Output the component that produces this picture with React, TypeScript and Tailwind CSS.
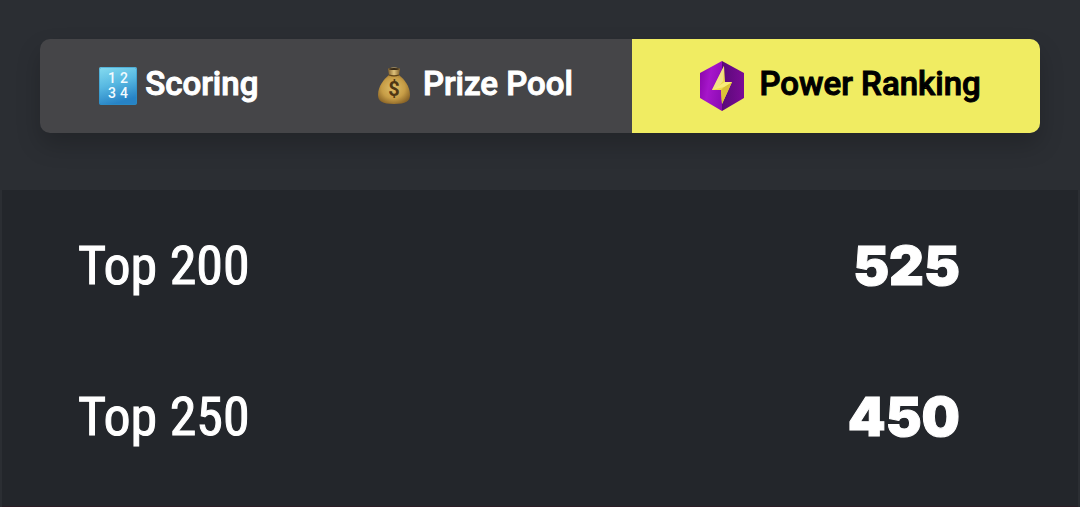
import { useState } from 'react';
import clsx from 'clsx';

const rankings = [
  { place: 'Top 200', points: 525 },
  { place: 'Top 250', points: 450 },
];

function NumbersIcon() {
  return (
    <svg viewBox="0 0 38 38" className="h-[38px] w-[38px] shrink-0" aria-hidden="true">
      <defs>
        <linearGradient id="numbers-bg" x1="0" y1="0" x2="0.3" y2="1">
          <stop offset="0" stopColor="#86dcf0" />
          <stop offset="0.5" stopColor="#58b9e2" />
          <stop offset="1" stopColor="#2783c6" />
        </linearGradient>
      </defs>
      <rect width="38" height="38" rx="2" fill="url(#numbers-bg)" />
      <rect x="0.5" y="0.5" width="37" height="37" rx="2" fill="none" stroke="#2c8fc4" strokeOpacity="0.5" />
      <g
        fill="#f2fbff"
        fontFamily="Roboto, sans-serif"
        fontWeight="500"
        fontSize="14"
        textAnchor="middle"
        className="[-webkit-text-stroke:0]"
      >
        <text x="13" y="16">1</text>
        <text x="25" y="16">2</text>
        <text x="13" y="31">3</text>
        <text x="25" y="31">4</text>
      </g>
    </svg>
  );
}

function MoneyBagIcon() {
  return (
    <svg viewBox="0 0 34 38" className="h-[38px] w-[34px] shrink-0" aria-hidden="true">
      <defs>
        <radialGradient id="bag-body" cx="0.48" cy="0.45" r="0.6">
          <stop offset="0" stopColor="#e0bf69" />
          <stop offset="0.6" stopColor="#c79d46" />
          <stop offset="1" stopColor="#8a6427" />
        </radialGradient>
        <linearGradient id="bag-neck" x1="0" x2="1">
          <stop offset="0" stopColor="#80602c" />
          <stop offset="0.5" stopColor="#dfc27b" />
          <stop offset="1" stopColor="#80602c" />
        </linearGradient>
      </defs>
      <path d="M12 8C7 12 1 19 1 28c0 6 4 9 16 9s16-3 16-9C33 19 27 12 22 8z" fill="url(#bag-body)" />
      <path d="M11 2c1-2 11-2 12 0l-1 6c-2 1-8 1-10 0z" fill="url(#bag-neck)" />
      <ellipse cx="17" cy="2" rx="5" ry="1" fill="#382a17" />
      <path d="M12 8c3 1 7 1 10 0" fill="none" stroke="#604316" strokeWidth="1.2" />
      <text x="17" y="29" textAnchor="middle" fontFamily="Roboto, sans-serif" fontWeight="700" fontSize="20" fill="#4f3713">
        $
      </text>
    </svg>
  );
}

function PowerIcon() {
  return (
    <svg viewBox="0 0 44 50" className="ml-2 h-[50px] w-[44px] shrink-0" aria-hidden="true">
      <defs>
        <linearGradient id="power-left" x1="0" x2="1" y1="0.3" y2="0.7">
          <stop offset="0" stopColor="#8d08ae" />
          <stop offset="0.4" stopColor="#a616ca" />
          <stop offset="1" stopColor="#8d0cb5" />
        </linearGradient>
        <linearGradient id="power-right" x1="0" x2="1">
          <stop offset="0" stopColor="#5a0a79" />
          <stop offset="1" stopColor="#7b0b96" />
        </linearGradient>
      </defs>
      <path d="M22 0 0 12v25l22 13z" fill="url(#power-left)" />
      <path d="m22 0 22 12v25L22 50z" fill="url(#power-right)" />
      <path d="M24 5 12 29h9l1 14 10-22h-7z" fill="#efdc50" />
      <path d="M24 5 12 29l7-4 4-5z" fill="#f3e287" />
      <path d="m32 21-8 5-3 3 1 14z" fill="#dcc137" />
      <path d="m32 21-8 5-12 3 8-5 5-3z" fill="#f9ec79" />
    </svg>
  );
}

const tabs = [
  { id: 'scoring', label: 'Scoring', icon: <NumbersIcon />, gap: 'gap-2' },
  { id: 'prize', label: 'Prize Pool', icon: <MoneyBagIcon />, gap: 'gap-3' },
  { id: 'power', label: 'Power Ranking', icon: <PowerIcon />, gap: 'gap-4' },
];

export default function App() {
  const [active, setActive] = useState('power');

  return (
    <div className="flex min-h-screen flex-col bg-[#2b2e33] font-[Roboto,sans-serif] text-white">
      {/* Tab bar */}
      <div className="px-10 pt-[39px] pb-[57px]">
        <div role="tablist" className="flex overflow-hidden rounded-[10px] bg-[#454548] shadow-[0_12px_24px_rgba(0,0,0,0.2)]">
          {tabs.map((tab) => (
            <button
              key={tab.id}
              type="button"
              role="tab"
              aria-selected={active === tab.id}
              onClick={() => setActive(tab.id)}
              className={clsx(
                'flex h-[94px] grow items-center justify-center px-[58px] text-[33px] leading-10 font-medium whitespace-nowrap [-webkit-text-stroke:1px_currentColor]',
                tab.gap,
                active === tab.id ? 'bg-[#f0ec62] text-black' : 'text-white'
              )}
            >
              {tab.icon}
              <span className="pb-1">{tab.label}</span>
            </button>
          ))}
        </div>
      </div>

      {/* Points table */}
      <div className="mx-[2px] grow border-b border-[#2b1d26] bg-[#23262b]">
        <table className="w-full">
          <tbody>
            {rankings.map((row) => (
              <tr key={row.place} className="h-[151px]">
                <th
                  scope="row"
                  className="pl-[76px] text-left font-['Liberation_Sans_Narrow','Roboto_Condensed',Roboto,sans-serif] text-[54px] leading-[64px] font-normal [-webkit-text-stroke:1px_currentColor]"
                >
                  {row.place}
                </th>
                <td className="pr-[118px] text-right font-[Inter,sans-serif] text-[54px] leading-[64px] font-black [-webkit-text-stroke:1px_currentColor]">
                  {row.points}
                </td>
              </tr>
            ))}
          </tbody>
        </table>
      </div>
    </div>
  );
}
